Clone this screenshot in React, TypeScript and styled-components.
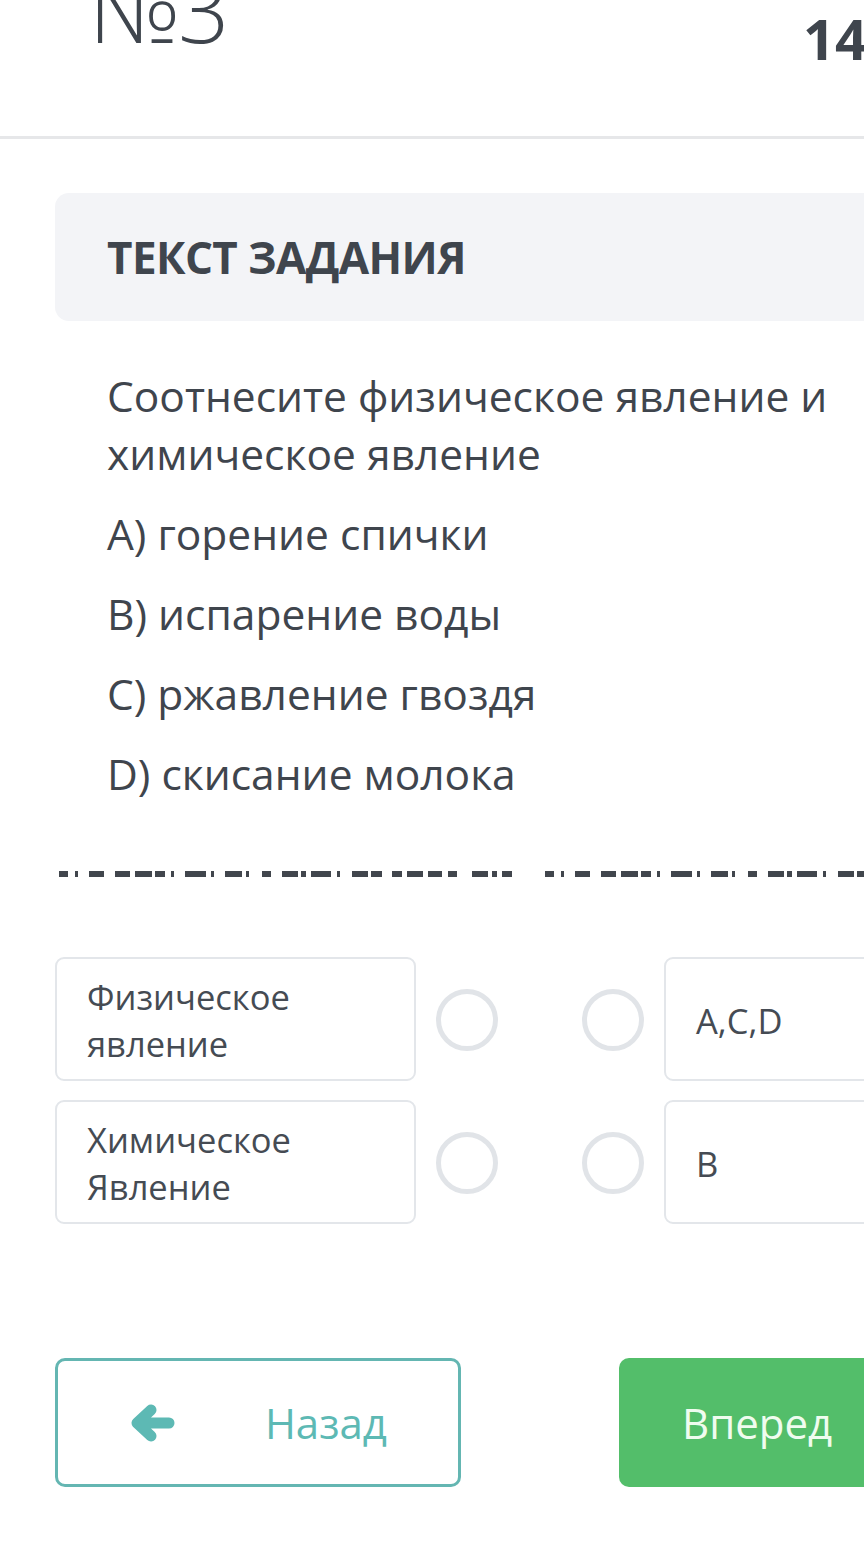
import React from "react";
import styled, { createGlobalStyle } from "styled-components";

const GlobalStyle = createGlobalStyle`
  html, body {
    margin: 0;
    padding: 0;
    background: #ffffff;
    overflow: hidden;
  }
  body {
    font-family: "Open Sans", "Noto Sans", sans-serif;
    color: #3f454d;
  }
`;

const Page = styled.div`
  width: 1080px;
  min-height: 1548px;
  background: #ffffff;
`;

const Header = styled.header`
  display: flex;
  align-items: flex-start;
  height: 136px;
  padding: 0 55px;
  border-bottom: 3px solid #e6e7e9;
  box-sizing: content-box;
`;

const TaskNumber = styled.h1`
  margin: -37px 0 0 34px;
  font-size: 90px;
  line-height: 90px;
  font-weight: 300;
  color: #3f454d;
  letter-spacing: -2px;
`;

const Timer = styled.div`
  margin: 6px 0 0 auto;
  width: 222px;
  font-size: 56px;
  line-height: 64px;
  font-weight: 700;
  color: #3f454d;
`;

const Content = styled.main`
  padding: 54px 55px 0 55px;
  display: flex;
  flex-direction: column;
`;

const TaskHead = styled.div`
  height: 128px;
  border-radius: 14px;
  background: #f3f4f7;
  display: flex;
  align-items: center;
  padding: 0 52px;
`;

const TaskTitle = styled.h2`
  margin: 0;
  font-size: 44px;
  font-weight: 700;
  letter-spacing: -0.6px;
  color: #3f454d;
`;

const Question = styled.div`
  padding: 46px 40px 0 52px;
`;

const Para = styled.p`
  margin: 0 0 22px 0;
  font-size: 42.5px;
  line-height: 58px;
  color: #3f454d;
`;

const DashRow = styled.div`
  display: flex;
  gap: 30px;
  margin: 46px 0 0 4px;
  height: 6px;
`;

const Matches = styled.div`
  display: flex;
  flex-direction: column;
  gap: 19px;
  margin-top: 80px;
`;

const MatchRow = styled.div`
  display: grid;
  grid-template-columns: 361px 1fr 361px;
`;

const Card = styled.div`
  box-sizing: border-box;
  height: 124px;
  border: 2px solid #e3e6ea;
  border-radius: 9px;
  padding: 2px 30px 0 30px;
  display: flex;
  align-items: center;
  font-size: 34.5px;
  line-height: 47px;
  color: #454b53;
`;

const Dots = styled.div`
  display: flex;
  justify-content: space-between;
  align-items: center;
  padding: 2px 20px 0 20px;
`;

const Radio = styled.span`
  box-sizing: border-box;
  width: 62px;
  height: 62px;
  border-radius: 50%;
  border: 5px solid #e1e4e8;
`;

const Buttons = styled.div`
  display: flex;
  justify-content: space-between;
  margin-top: 134px;
`;

const NavButton = styled.button<{ $primary?: boolean }>`
  box-sizing: border-box;
  width: 406px;
  height: 129px;
  border-radius: 10px;
  display: flex;
  align-items: center;
  justify-content: space-between;
  padding: ${(p) => (p.$primary ? "0 72px 0 63px" : "0 71px 0 73px")};
  font-family: "Open Sans", "Noto Sans", sans-serif;
  font-size: 42px;
  border: ${(p) => (p.$primary ? "none" : "3px solid #64b6b2")};
  background: ${(p) => (p.$primary ? "#53be6a" : "#ffffff")};
  color: ${(p) => (p.$primary ? "#effcef" : "#5db9b4")};
  cursor: pointer;
`;

const ArrowIcon: React.FC<{ dir: "left" | "right" }> = ({ dir }) => (
  <svg
    width={44}
    height={38}
    viewBox="0 0 44 38"
    style={dir === "right" ? { transform: "scaleX(-1)" } : undefined}
  >
    <path
      d="M38 19 H8 M20 6 L6 19 L20 32"
      fill="none"
      stroke="currentColor"
      strokeWidth={11}
      strokeLinecap="round"
      strokeLinejoin="round"
    />
  </svg>
);

const dashes: [number, number][] = [
  [0, 9], [16, 3], [30, 15], [56, 15], [76, 17], [96, 10], [112, 3],
  [126, 21], [152, 3], [166, 17], [187, 3], [203, 9], [223, 8],
  [226, 13], [242, 5], [252, 20], [278, 3], [293, 16], [312, 11],
  [333, 10], [348, 16], [369, 14], [389, 9], [413, 16], [433, 5], [443, 10],
];

const DashLine: React.FC<{ width: number }> = ({ width }) => (
  <svg width={width} height={6} viewBox={`0 0 ${width} 6`}>
    {dashes.map(([x, w], i) => (
      <rect key={i} x={x} y={0} width={w} height={6} fill="#41464d" />
    ))}
  </svg>
);

const rows = [
  { left: ["Физическое", "явление"], right: "A,C,D" },
  { left: ["Химическое", "Явление"], right: "B" },
];

export default function App() {
  return (
    <Page>
      <GlobalStyle />
      <Header>
        <TaskNumber>№3</TaskNumber>
        <Timer>14</Timer>
      </Header>
      <Content>
        <TaskHead>
          <TaskTitle>ТЕКСТ ЗАДАНИЯ</TaskTitle>
        </TaskHead>
        <Question>
          <Para>Соотнесите физическое явление и химическое явление</Para>
          <Para>А) горение спички</Para>
          <Para>В) испарение воды</Para>
          <Para>С) ржавление гвоздя</Para>
          <Para>D) скисание молока</Para>
        </Question>
        <DashRow>
          <DashLine width={456} />
          <DashLine width={456} />
        </DashRow>
        <Matches>
          {rows.map((r, i) => (
            <MatchRow key={i}>
              <Card>
                <div>
                  {r.left[0]}
                  <br />
                  {r.left[1]}
                </div>
              </Card>
              <Dots>
                <Radio />
                <Radio />
              </Dots>
              <Card>{r.right}</Card>
            </MatchRow>
          ))}
        </Matches>
        <Buttons>
          <NavButton>
            <ArrowIcon dir="left" />
            <span>Назад</span>
          </NavButton>
          <NavButton $primary>
            <span>Вперед</span>
            <ArrowIcon dir="right" />
          </NavButton>
        </Buttons>
      </Content>
    </Page>
  );
}
